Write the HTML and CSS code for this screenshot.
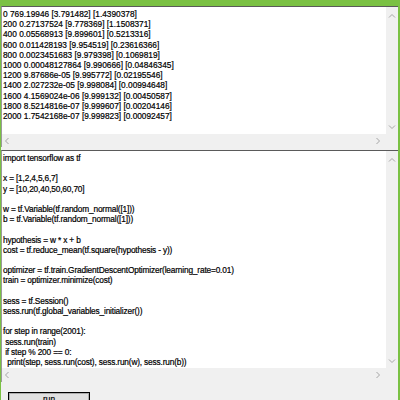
FILE: index.html
```html
<!DOCTYPE html>
<html lang="en">
<head>
    <meta charset="UTF-8">
    <title>run</title>
    <link rel="stylesheet" href="styles.css">
</head>
<body>

    <div class="window">

        <div class="field output">
            <div class="text">0 769.19946 [3.791482] [1.4390378]
200 0.27137524 [9.778369] [1.1508371]
400 0.05568913 [9.899601] [0.5213316]
600 0.011428193 [9.954519] [0.23616366]
800 0.0023451683 [9.979398] [0.1069819]
1000 0.00048127864 [9.990666] [0.04846345]
1200 9.87686e-05 [9.995772] [0.02195546]
1400 2.027232e-05 [9.998084] [0.00994648]
1600 4.1569024e-06 [9.999132] [0.00450587]
1800 8.5214816e-07 [9.999607] [0.00204146]
2000 1.7542168e-07 [9.999823] [0.00092457]</div>
            <div class="vscroll">
                <svg class="arrow" width="8" height="6" viewBox="0 0 8 6"><polyline points="1,4.5 4,1.5 7,4.5"/></svg>
                <svg class="arrow" width="8" height="6" viewBox="0 0 8 6"><polyline points="1,1.5 4,4.5 7,1.5"/></svg>
            </div>
            <div class="hscroll">
                <svg class="arrow" width="6" height="8" viewBox="0 0 6 8"><polyline points="4.5,1 1.5,4 4.5,7"/></svg>
                <svg class="arrow" width="6" height="8" viewBox="0 0 6 8"><polyline points="1.5,1 4.5,4 1.5,7"/></svg>
            </div>
            <div class="corner"></div>
        </div>

        <div class="field source">
            <div class="text">import tensorflow as tf

x = [1,2,4,5,6,7]
y = [10,20,40,50,60,70]

w = tf.Variable(tf.random_normal([1]))
b = tf.Variable(tf.random_normal([1]))

hypothesis = w * x + b
cost = tf.reduce_mean(tf.square(hypothesis - y))

optimizer = tf.train.GradientDescentOptimizer(learning_rate=0.01)
train = optimizer.minimize(cost)

sess = tf.Session()
sess.run(tf.global_variables_initializer())

for step in range(2001):
 sess.run(train)
 if step % 200 == 0:
  print(step, sess.run(cost), sess.run(w), sess.run(b))</div>
            <div class="vscroll">
                <svg class="arrow" width="8" height="6" viewBox="0 0 8 6"><polyline points="1,4.5 4,1.5 7,4.5"/></svg>
                <svg class="arrow" width="8" height="6" viewBox="0 0 8 6"><polyline points="1,1.5 4,4.5 7,1.5"/></svg>
            </div>
            <div class="hscroll">
                <svg class="arrow" width="6" height="8" viewBox="0 0 6 8"><polyline points="4.5,1 1.5,4 4.5,7"/></svg>
                <svg class="arrow" width="6" height="8" viewBox="0 0 6 8"><polyline points="1.5,1 4.5,4 1.5,7"/></svg>
            </div>
            <div class="corner"></div>
        </div>

        <div class="buttons">
            <button class="run-button">run</button>
        </div>

    </div>

</body>
</html>
```

FILE: styles.css
```css
html, body {
    margin: 0;
    height: 100%;
    overflow: hidden;
}

body {
    background-color: #7ac143;
    font-family: "Liberation Sans", Arial, sans-serif;
    font-size: 8.3px;
    color: black;
}

.window {
    margin: 6px 2px 0 1px;
    height: 394px;
    background-color: #f0f0f0;
    display: flex;
    flex-direction: column;
}

.field {
    display: grid;
    grid-template-columns: 1fr 12px;
    border-top: 1px solid #5a5a5a;
    border-left: 1px solid #9a9a9a;
    background-color: white;
}

.output {
    height: 140px;
    grid-template-rows: 127px 13px;
}

.source {
    margin-top: 3px;
    height: 231px;
    grid-template-rows: 217px 14px;
}

.text {
    white-space: pre;
    overflow: hidden;
    line-height: 10.2px;
    padding: 2px 0 0 1px;
    -webkit-text-stroke: 0.2px black;
}

.source .text {
    letter-spacing: -0.16px;
}

.vscroll {
    background-color: #f0f0f0;
    display: flex;
    flex-direction: column;
    justify-content: space-between;
    align-items: center;
    padding: 6px 0 4px;
}

.hscroll {
    background-color: #f0f0f0;
    display: flex;
    justify-content: space-between;
    align-items: center;
    padding: 0 5px 0 2px;
}

.corner {
    background-color: #f0f0f0;
}

.arrow polyline {
    fill: none;
    stroke: #a6a6a6;
    stroke-width: 1;
}

.buttons {
    padding: 10px 0 0 7px;
}

.run-button {
    width: 82px;
    height: 22px;
    font-family: "Liberation Sans", Arial, sans-serif;
    font-size: 8.3px;
    background-color: #e1e1e1;
    border: 1px solid #000;
    box-shadow: inset 0 0 0 1px #adadad;
    padding: 0 0 9px;
    -webkit-text-stroke: 0.2px black;
}
```
